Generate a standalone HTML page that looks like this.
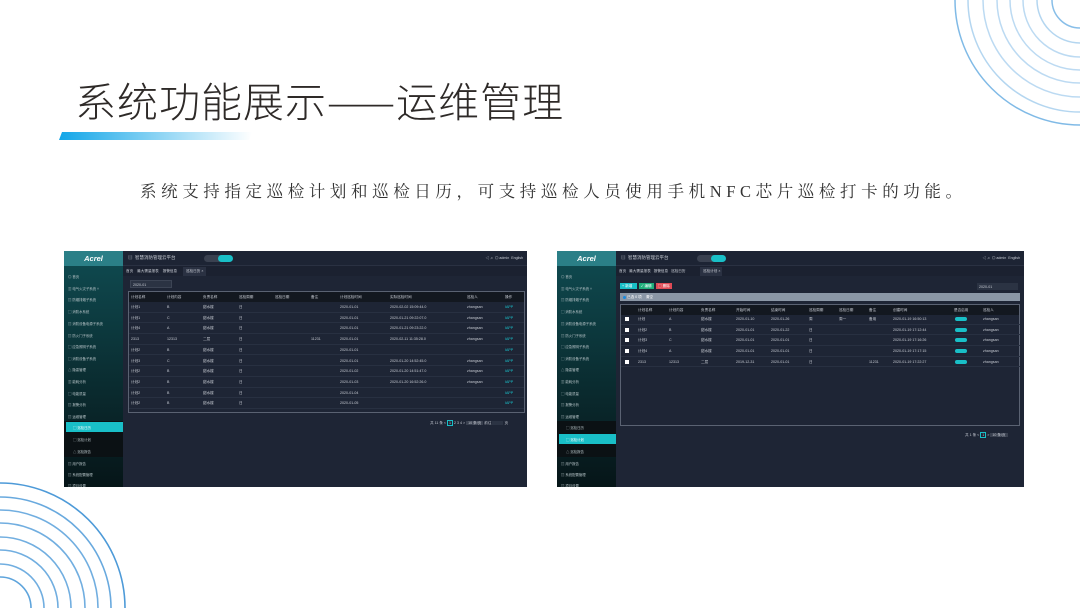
<!DOCTYPE html>
<html style="overflow:hidden"><head><meta charset="utf-8"><style>
*{margin:0;padding:0;box-sizing:border-box}
html,body{width:1080px;height:608px;overflow:hidden}
body{background:#fff;position:relative;font-family:"Liberation Sans","Noto Sans CJK SC",sans-serif}
.a{position:absolute}
.t{position:absolute;font-size:3.6px;color:#c8ccd4;white-space:nowrap;line-height:4px}
.shot{position:absolute;background:#1e2535;overflow:hidden}
.side{position:absolute;left:0;top:0;width:59px;height:100%;background:linear-gradient(#0f4b51,#0a2a2e 60%,#061518)}
.logo{position:absolute;left:0;top:0;width:59px;height:15px;background:#2b7f87;color:#fff;font:italic bold 7.5px "Liberation Sans",sans-serif;text-align:center;line-height:15px}
.hdr{position:absolute;left:59px;top:0;right:0;height:15px;background:#1d2434;border-bottom:1px solid #2a3142}
.tabs{position:absolute;left:59px;top:15px;right:0;height:10px;background:#1b2130}
.mi{position:absolute;left:4px;font-size:3.4px;color:#b5c2c6;white-space:nowrap}
.tbl{position:absolute;border:1px solid #5a6272}
.th{position:absolute;left:0;right:0;top:0;height:10px;background:#131820}
.row{position:absolute;left:0;right:0;height:10.7px;border-bottom:1px solid #283041}
</style></head><body>

<svg class="a" style="left:0;top:0" width="1080" height="608">
<g fill="none" stroke="#6aaee2" stroke-width="1.5">
<circle cx="1080" cy="0" r="125" opacity=".85"/><circle cx="1080" cy="0" r="112" opacity=".5"/><circle cx="1080" cy="0" r="97" opacity=".45"/><circle cx="1080" cy="0" r="83" opacity=".45"/><circle cx="1080" cy="0" r="70" opacity=".45"/><circle cx="1080" cy="0" r="57" opacity=".45"/><circle cx="1080" cy="0" r="43" opacity=".5"/><circle cx="1080" cy="0" r="28" opacity=".8"/>
</g>
<g fill="none" stroke="#4d9ad8" stroke-width="1.6">
<circle cx="0" cy="608" r="125"/><circle cx="0" cy="608" r="111" opacity=".85"/><circle cx="0" cy="608" r="98" opacity=".8"/><circle cx="0" cy="608" r="85" opacity=".8"/><circle cx="0" cy="608" r="71" opacity=".8"/><circle cx="0" cy="608" r="58" opacity=".8"/><circle cx="0" cy="608" r="44" opacity=".8"/><circle cx="0" cy="608" r="31" opacity=".9"/>
</g>
<defs><linearGradient id="g" x1="0" x2="1"><stop offset="0" stop-color="#12a6e8"/><stop offset="1" stop-color="#fff"/></linearGradient></defs>
<polygon points="62,132 252,132 249,140 59,140" fill="url(#g)"/>
</svg>

<div class="a" style="left:75px;top:75px;font-size:41px;color:#2e2a28;letter-spacing:1px;font-family:'Noto Sans CJK SC',sans-serif;font-weight:300;line-height:48px;white-space:nowrap">系统功能展示——运维管理</div>
<div class="a" style="left:140px;top:181px;font-size:16.5px;color:#333;letter-spacing:4.6px;font-family:'Liberation Serif','Noto Serif CJK SC',serif;line-height:22px;white-space:nowrap">系统支持指定巡检计划和巡检日历，可支持巡检人员使用手机NFC芯片巡检打卡的功能。</div>

<!-- LEFT SHOT -->
<div class="shot" style="left:64px;top:251px;width:463px;height:236px">
<div class="side">
<div class="logo">Acrel</div>
<div class="mi" style="top:23px">◎ 首页</div>
<div class="mi" style="top:35px">▥ 电气火灾子系统 ˅</div>
<div class="mi" style="top:46px">▤ 防烟排烟子系统</div>
<div class="mi" style="top:58px">▢ 消防水系统</div>
<div class="mi" style="top:70px">▤ 消防设备电源子系统</div>
<div class="mi" style="top:82px">▤ 防火门子系统</div>
<div class="mi" style="top:93px">▢ 应急照明子系统</div>
<div class="mi" style="top:105px">▢ 消防设备子系统</div>
<div class="mi" style="top:116px">△ 隐患管理</div>
<div class="mi" style="top:128px">▥ 能耗分析</div>
<div class="mi" style="top:140px">▢ 电能质量</div>
<div class="mi" style="top:151px">▤ 报警分析</div>
<div class="mi" style="top:163px">▤ 运维管理</div>
<div class="a" style="left:0;top:170px;width:59px;height:36px;background:#0b1114"></div>
<div class="a" style="left:2px;top:171px;width:57px;height:10px;background:#19bfc7"></div>
<div class="mi" style="top:174px;left:9px;color:#fff">▢ 巡检日历</div>
<div class="mi" style="top:186px;left:9px">▢ 巡检计划</div>
<div class="mi" style="top:198px;left:9px">△ 巡检报告</div>
<div class="mi" style="top:210px">▤ 用户报告</div>
<div class="mi" style="top:221px">▤ 系统配置管理</div>
<div class="mi" style="top:232px">▤ 项目设置</div>
</div>
<div class="hdr"><span class="t" style="left:5px;top:5px;font-size:4.5px">▤ &nbsp;智慧消防管理云平台</span>
<div class="a" style="left:81px;top:4px;width:28px;height:7px;border-radius:4px;background:#3a4150"></div><div class="a" style="left:95px;top:4px;width:15px;height:7px;border-radius:4px;background:#19bfc7"></div>
<span class="t" style="right:4px;top:5px">◁ ♫ &nbsp;◎ admin &nbsp;English</span></div>
<div class="tabs"><span class="t" style="left:3px;top:3px">首页 &nbsp;&nbsp;&nbsp;最大需量报表 &nbsp;&nbsp;&nbsp;报警信息</span><div class="a" style="left:60px;top:1px;width:23px;height:9px;background:#2a3142"></div><span class="t" style="left:63px;top:3px">巡检日历 ×</span></div>
<div class="a" style="left:66px;top:29px;width:42px;height:8px;background:#2b3343;border:1px solid #3c4454"><span class="t" style="left:2px;top:1.5px">2020-01</span></div>
<div class="tbl" style="left:64px;top:40px;width:397px;height:122px">
<div class="th"><span class="t" style="left:2px;top:3px">计划名称</span><span class="t" style="left:38px;top:3px">计划内容</span><span class="t" style="left:74px;top:3px">负责名称</span><span class="t" style="left:110px;top:3px">巡检周期</span><span class="t" style="left:146px;top:3px">巡检日期</span><span class="t" style="left:182px;top:3px">备注</span><span class="t" style="left:211px;top:3px">计划巡检时间</span><span class="t" style="left:261px;top:3px">实际巡检时间</span><span class="t" style="left:338px;top:3px">巡检人</span><span class="t" style="left:376px;top:3px">操作</span></div>
</div>
<span class="t" style="left:366px;top:170px">共 11 条 &lt; <span style="border:1px solid #19bfc7;padding:0 1px">1</span> 2 3 4 &gt; <span style="background:#3a4150;padding:0 2px">10 条/页</span> 前往 <span style="background:#2b3343;padding:0 5px">&nbsp;</span> 页</span>
</div>

<!-- RIGHT SHOT -->
<div class="shot" style="left:557px;top:251px;width:467px;height:236px">
<div class="side">
<div class="logo">Acrel</div>
<div class="mi" style="top:23px">◎ 首页</div>
<div class="mi" style="top:35px">▥ 电气火灾子系统 ˅</div>
<div class="mi" style="top:46px">▤ 防烟排烟子系统</div>
<div class="mi" style="top:58px">▢ 消防水系统</div>
<div class="mi" style="top:70px">▤ 消防设备电源子系统</div>
<div class="mi" style="top:82px">▤ 防火门子系统</div>
<div class="mi" style="top:93px">▢ 应急照明子系统</div>
<div class="mi" style="top:105px">▢ 消防设备子系统</div>
<div class="mi" style="top:116px">△ 隐患管理</div>
<div class="mi" style="top:128px">▥ 能耗分析</div>
<div class="mi" style="top:140px">▢ 电能质量</div>
<div class="mi" style="top:151px">▤ 报警分析</div>
<div class="mi" style="top:163px">▤ 运维管理</div>
<div class="a" style="left:0;top:170px;width:59px;height:36px;background:#0b1114"></div>
<div class="a" style="left:2px;top:183px;width:57px;height:10px;background:#19bfc7"></div>
<div class="mi" style="top:174px;left:9px">▢ 巡检日历</div>
<div class="mi" style="top:186px;left:9px;color:#fff">▢ 巡检计划</div>
<div class="mi" style="top:198px;left:9px">△ 巡检报告</div>
<div class="mi" style="top:210px">▤ 用户报告</div>
<div class="mi" style="top:221px">▤ 系统配置管理</div>
<div class="mi" style="top:232px">▤ 项目设置</div>
</div>
<div class="hdr"><span class="t" style="left:5px;top:5px;font-size:4.5px">▤ &nbsp;智慧消防管理云平台</span>
<div class="a" style="left:81px;top:4px;width:28px;height:7px;border-radius:4px;background:#3a4150"></div><div class="a" style="left:95px;top:4px;width:15px;height:7px;border-radius:4px;background:#19bfc7"></div>
<span class="t" style="right:4px;top:5px">◁ ♫ &nbsp;◎ admin &nbsp;English</span></div>
<div class="tabs"><span class="t" style="left:3px;top:3px">首页 &nbsp;&nbsp;最大需量报表 &nbsp;&nbsp;报警信息 &nbsp;&nbsp;巡检日历</span><div class="a" style="left:84px;top:1px;width:22px;height:9px;background:#2a3142"></div><span class="t" style="left:87px;top:3px">巡检计划 ×</span></div>
<div class="a" style="left:63px;top:32px;width:17px;height:6px;background:#19bfc7"></div><span class="t" style="left:65px;top:33px;color:#fff">+ 新增</span>
<div class="a" style="left:82px;top:32px;width:15px;height:6px;background:#1fae7a"></div><span class="t" style="left:84px;top:33px;color:#fff">✓ 编辑</span>
<div class="a" style="left:99px;top:32px;width:16px;height:6px;background:#e04a55"></div><span class="t" style="left:101px;top:33px;color:#fff">▢ 删除</span>
<div class="a" style="left:420px;top:32px;width:41px;height:7px;background:#2b3343"><span class="t" style="left:2px;top:1.5px">2020-01</span></div>
<div class="a" style="left:63px;top:42px;width:400px;height:8px;background:#8b97a6"></div>
<div class="a" style="left:66px;top:44.5px;width:3px;height:3px;border-radius:50%;background:#1a8ae0"></div><span class="t" style="left:70px;top:44px;color:#fff">已选 0 项 &nbsp;&nbsp;&nbsp;清空</span>
<div class="tbl" style="left:63px;top:53px;width:400px;height:122px">
<div class="th"><span class="t" style="left:17px;top:3px">计划名称</span><span class="t" style="left:48px;top:3px">计划内容</span><span class="t" style="left:80px;top:3px">负责名称</span><span class="t" style="left:115px;top:3px">开始时间</span><span class="t" style="left:150px;top:3px">结束时间</span><span class="t" style="left:188px;top:3px">巡检周期</span><span class="t" style="left:218px;top:3px">巡检日期</span><span class="t" style="left:248px;top:3px">备注</span><span class="t" style="left:272px;top:3px">创建时间</span><span class="t" style="left:333px;top:3px">是否启用</span><span class="t" style="left:362px;top:3px">巡检人</span></div>
</div>
<span class="t" style="left:408px;top:182px">共 1 条 &lt; <span style="border:1px solid #19bfc7;padding:0 1px">1</span> &gt; <span style="background:#3a4150;padding:0 2px">10 条/页</span></span>
</div>

<!-- rows left -->
<div class="a" style="left:129px;top:302px;width:395px;height:108px">
<div class="row" style="top:0"><span class="t" style="left:2px;top:3px">计划1</span><span class="t" style="left:38px;top:3px">B</span><span class="t" style="left:74px;top:3px">甜水楼</span><span class="t" style="left:110px;top:3px">日</span><span class="t" style="left:211px;top:3px">2020-01-01</span><span class="t" style="left:261px;top:3px">2020-02-02 15:09:44.0</span><span class="t" style="left:338px;top:3px">zhangsan</span><span class="t" style="left:376px;top:3px;color:#19c5cf">IAPP</span></div>
<div class="row" style="top:10.7px"><span class="t" style="left:2px;top:3px">计划1</span><span class="t" style="left:38px;top:3px">C</span><span class="t" style="left:74px;top:3px">甜水楼</span><span class="t" style="left:110px;top:3px">日</span><span class="t" style="left:211px;top:3px">2020-01-01</span><span class="t" style="left:261px;top:3px">2020-01-21 09:22:07.0</span><span class="t" style="left:338px;top:3px">zhangsan</span><span class="t" style="left:376px;top:3px;color:#19c5cf">IAPP</span></div>
<div class="row" style="top:21.4px"><span class="t" style="left:2px;top:3px">计划4</span><span class="t" style="left:38px;top:3px">A</span><span class="t" style="left:74px;top:3px">甜水楼</span><span class="t" style="left:110px;top:3px">日</span><span class="t" style="left:211px;top:3px">2020-01-01</span><span class="t" style="left:261px;top:3px">2020-01-21 09:23:22.0</span><span class="t" style="left:338px;top:3px">zhangsan</span><span class="t" style="left:376px;top:3px;color:#19c5cf">IAPP</span></div>
<div class="row" style="top:32.1px"><span class="t" style="left:2px;top:3px">2313</span><span class="t" style="left:38px;top:3px">12313</span><span class="t" style="left:74px;top:3px">二层</span><span class="t" style="left:110px;top:3px">日</span><span class="t" style="left:182px;top:3px">11231</span><span class="t" style="left:211px;top:3px">2020-01-01</span><span class="t" style="left:261px;top:3px">2020-02-11 11:35:28.0</span><span class="t" style="left:338px;top:3px">zhangsan</span><span class="t" style="left:376px;top:3px;color:#19c5cf">IAPP</span></div>
<div class="row" style="top:42.8px"><span class="t" style="left:2px;top:3px">计划2</span><span class="t" style="left:38px;top:3px">B</span><span class="t" style="left:74px;top:3px">甜水楼</span><span class="t" style="left:110px;top:3px">日</span><span class="t" style="left:211px;top:3px">2020-01-01</span><span class="t" style="left:376px;top:3px;color:#19c5cf">IAPP</span></div>
<div class="row" style="top:53.5px"><span class="t" style="left:2px;top:3px">计划3</span><span class="t" style="left:38px;top:3px">C</span><span class="t" style="left:74px;top:3px">甜水楼</span><span class="t" style="left:110px;top:3px">日</span><span class="t" style="left:211px;top:3px">2020-01-01</span><span class="t" style="left:261px;top:3px">2020-01-20 14:52:45.0</span><span class="t" style="left:338px;top:3px">zhangsan</span><span class="t" style="left:376px;top:3px;color:#19c5cf">IAPP</span></div>
<div class="row" style="top:64.2px"><span class="t" style="left:2px;top:3px">计划2</span><span class="t" style="left:38px;top:3px">B</span><span class="t" style="left:74px;top:3px">甜水楼</span><span class="t" style="left:110px;top:3px">日</span><span class="t" style="left:211px;top:3px">2020-01-02</span><span class="t" style="left:261px;top:3px">2020-01-20 14:51:47.0</span><span class="t" style="left:338px;top:3px">zhangsan</span><span class="t" style="left:376px;top:3px;color:#19c5cf">IAPP</span></div>
<div class="row" style="top:74.9px"><span class="t" style="left:2px;top:3px">计划2</span><span class="t" style="left:38px;top:3px">B</span><span class="t" style="left:74px;top:3px">甜水楼</span><span class="t" style="left:110px;top:3px">日</span><span class="t" style="left:211px;top:3px">2020-01-03</span><span class="t" style="left:261px;top:3px">2020-01-20 16:52:26.0</span><span class="t" style="left:338px;top:3px">zhangsan</span><span class="t" style="left:376px;top:3px;color:#19c5cf">IAPP</span></div>
<div class="row" style="top:85.6px"><span class="t" style="left:2px;top:3px">计划2</span><span class="t" style="left:38px;top:3px">B</span><span class="t" style="left:74px;top:3px">甜水楼</span><span class="t" style="left:110px;top:3px">日</span><span class="t" style="left:211px;top:3px">2020-01-04</span><span class="t" style="left:376px;top:3px;color:#19c5cf">IAPP</span></div>
<div class="row" style="top:96.3px"><span class="t" style="left:2px;top:3px">计划2</span><span class="t" style="left:38px;top:3px">B</span><span class="t" style="left:74px;top:3px">甜水楼</span><span class="t" style="left:110px;top:3px">日</span><span class="t" style="left:211px;top:3px">2020-01-05</span><span class="t" style="left:376px;top:3px;color:#19c5cf">IAPP</span></div>
</div>

<!-- rows right -->
<div class="a" style="left:621px;top:314px;width:399px;height:55px">
<div class="row" style="top:0"><div class="a" style="left:4px;top:3px;width:4px;height:4px;background:#fff"></div><span class="t" style="left:17px;top:3px">计划</span><span class="t" style="left:48px;top:3px">A</span><span class="t" style="left:80px;top:3px">甜水楼</span><span class="t" style="left:115px;top:3px">2020-01-10</span><span class="t" style="left:150px;top:3px">2020-01-26</span><span class="t" style="left:188px;top:3px">周</span><span class="t" style="left:218px;top:3px">周一</span><span class="t" style="left:248px;top:3px">备用</span><span class="t" style="left:272px;top:3px">2020-01-19 16:50:13</span><div class="a" style="left:334px;top:3px;width:12px;height:4px;border-radius:2px;background:#19bfc7"></div><span class="t" style="left:362px;top:3px">zhangsan</span></div>
<div class="row" style="top:10.7px"><div class="a" style="left:4px;top:3px;width:4px;height:4px;background:#fff"></div><span class="t" style="left:17px;top:3px">计划2</span><span class="t" style="left:48px;top:3px">B</span><span class="t" style="left:80px;top:3px">甜水楼</span><span class="t" style="left:115px;top:3px">2020-01-01</span><span class="t" style="left:150px;top:3px">2020-01-22</span><span class="t" style="left:188px;top:3px">日</span><span class="t" style="left:272px;top:3px">2020-01-19 17:12:44</span><div class="a" style="left:334px;top:3px;width:12px;height:4px;border-radius:2px;background:#19bfc7"></div><span class="t" style="left:362px;top:3px">zhangsan</span></div>
<div class="row" style="top:21.4px"><div class="a" style="left:4px;top:3px;width:4px;height:4px;background:#fff"></div><span class="t" style="left:17px;top:3px">计划3</span><span class="t" style="left:48px;top:3px">C</span><span class="t" style="left:80px;top:3px">甜水楼</span><span class="t" style="left:115px;top:3px">2020-01-01</span><span class="t" style="left:150px;top:3px">2020-01-01</span><span class="t" style="left:188px;top:3px">日</span><span class="t" style="left:272px;top:3px">2020-01-19 17:16:26</span><div class="a" style="left:334px;top:3px;width:12px;height:4px;border-radius:2px;background:#19bfc7"></div><span class="t" style="left:362px;top:3px">zhangsan</span></div>
<div class="row" style="top:32.1px"><div class="a" style="left:4px;top:3px;width:4px;height:4px;background:#fff"></div><span class="t" style="left:17px;top:3px">计划4</span><span class="t" style="left:48px;top:3px">A</span><span class="t" style="left:80px;top:3px">甜水楼</span><span class="t" style="left:115px;top:3px">2020-01-01</span><span class="t" style="left:150px;top:3px">2020-01-01</span><span class="t" style="left:188px;top:3px">日</span><span class="t" style="left:272px;top:3px">2020-01-19 17:17:15</span><div class="a" style="left:334px;top:3px;width:12px;height:4px;border-radius:2px;background:#19bfc7"></div><span class="t" style="left:362px;top:3px">zhangsan</span></div>
<div class="row" style="top:42.8px"><div class="a" style="left:4px;top:3px;width:4px;height:4px;background:#fff"></div><span class="t" style="left:17px;top:3px">2313</span><span class="t" style="left:48px;top:3px">12313</span><span class="t" style="left:80px;top:3px">二层</span><span class="t" style="left:115px;top:3px">2019-12-31</span><span class="t" style="left:150px;top:3px">2020-01-01</span><span class="t" style="left:188px;top:3px">日</span><span class="t" style="left:248px;top:3px">11231</span><span class="t" style="left:272px;top:3px">2020-01-19 17:22:27</span><div class="a" style="left:334px;top:3px;width:12px;height:4px;border-radius:2px;background:#19bfc7"></div><span class="t" style="left:362px;top:3px">zhangsan</span></div>
</div>
</body></html>
